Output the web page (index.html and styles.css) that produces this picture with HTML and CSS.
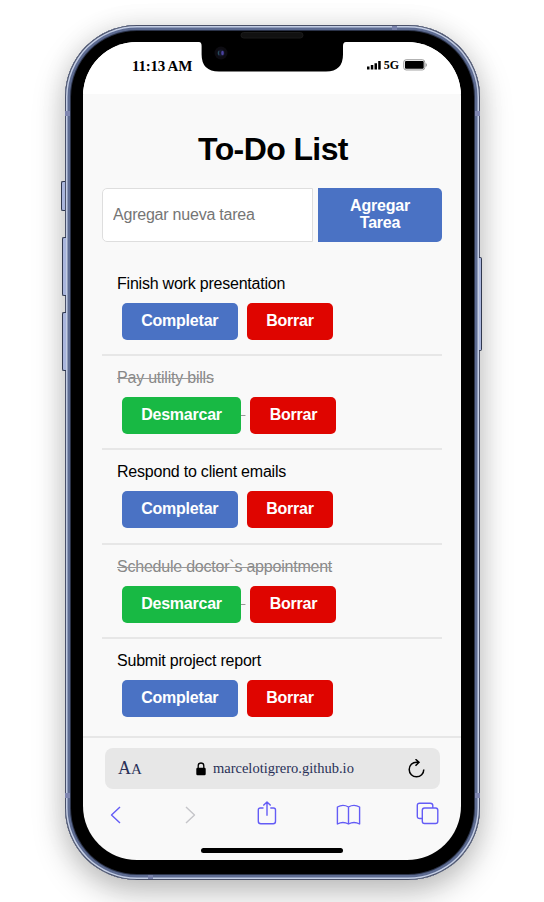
FILE: index.html
```html
<!DOCTYPE html>
<html lang="es">
<head>
<meta charset="utf-8">
<title>To-Do List</title>
<link rel="stylesheet" href="styles.css">
</head>
<body>
<div class="phone">
  <i class="key key-mute"></i><i class="key key-up"></i><i class="key key-down"></i><i class="key key-power"></i>
  <i class="seam seam-tl"></i><i class="seam seam-tr"></i><i class="seam seam-bl"></i><i class="seam seam-br"></i>
  <i class="seam-h seam-top"></i><i class="seam-h seam-bottom"></i>
  <div class="screen">
    <header class="status">
      <span class="time">11:13 AM</span>
      <span class="signal">
        <svg width="14" height="10" viewBox="0 0 14 10"><path d="M0 6.500h2.500V9.500H0zM3.800 5h2.500v4.500H3.800zM7.500 3.200H10v6.300H7.500zM11.200 1h2.500v8.500h-2.500z"/></svg>
        <span class="network">5G</span>
        <svg width="24" height="12" viewBox="0 0 24 12"><rect x=".750" y=".750" width="21" height="10.200" rx="2.400" fill="#fff" stroke="#999"/><rect x="2" y="2" width="18.700" height="7.800" rx="1"/><path d="M22.600 4v4q1.200-.6 1.200-2t-1.200-2" fill="#888"/></svg>
      </span>
    </header>
    <main class="app">
      <h1>To-Do List</h1>
      <form class="add">
        <input type="text" placeholder="Agregar nueva tarea">
        <button type="button">Agregar Tarea</button>
      </form>
      <ul class="tasks">
        <li><span>Finish work presentation</span><div><button class="complete">Completar</button> <button class="delete">Borrar</button></div></li>
        <li class="done"><span>Pay utility bills</span><div><button class="undo">Desmarcar</button> <button class="delete">Borrar</button></div></li>
        <li><span>Respond to client emails</span><div><button class="complete">Completar</button> <button class="delete">Borrar</button></div></li>
        <li class="done"><span>Schedule doctor`s appointment</span><div><button class="undo">Desmarcar</button> <button class="delete">Borrar</button></div></li>
        <li><span>Submit project report</span><div><button class="complete">Completar</button> <button class="delete">Borrar</button></div></li>
      </ul>
    </main>
    <footer class="browser">
      <div class="address">
        <span class="aa">A<small>A</small></span>
        <span class="url"><svg width="10" height="14" viewBox="0 0 10 14"><path d="M2.200 6V3.800a2.800 2.800 0 0 1 5.600 0V6" fill="none" stroke="#000" stroke-width="1.300"/><rect x=".3" y="5.800" width="9.400" height="7.400" rx="1.200"/></svg>marcelotigrero.github.io</span>
        <svg class="reload" width="17" height="20" viewBox="0 0 17 20"><path d="M11 3.200H8.500A7.300 7.300 0 1 0 15.800 10.500M7.500.2l3.500 3-3.500 3.500" fill="none" stroke="#000" stroke-width="1.500"/></svg>
      </div>
      <nav class="toolbar">
        <svg width="11" height="24" viewBox="0 0 11 24"><path d="M10 6 1.500 14l8.500 8"/></svg>
        <svg class="off" width="11" height="24" viewBox="0 0 11 24"><path d="M1 6 9.500 14 1 22"/></svg>
        <svg width="20" height="24" viewBox="0 0 20 24"><path d="M6.500 7H3.300Q1.300 7 1.300 9v11.300q0 2.500 2.500 2.500h12.400q2.300 0 2.300-2.500V9q0-2-2-2h-3.200M10 14.800V1.200M6.300 4.500 10 .9l3.700 3.600"/></svg>
        <svg width="25" height="24" viewBox="0 0 25 24"><path d="M12.500 6v17M12.500 6Q7 2.800 1.400 6v17q5.600-3 11.100 0 5.500-3 11.100 0V6Q18 2.800 12.500 6"/></svg>
        <svg width="23" height="24" viewBox="0 0 23 24"><rect x="6.300" y="7" width="15.500" height="15.500" rx="2.200"/><path d="M6.300 17.500H3.800Q1.300 17.500 1.300 15.200V4.600q0-2.400 2.400-2.400h10.600q2.500 0 2.500 2.400V7"/></svg>
      </nav>
      <div class="home"></div>
    </footer>
  </div>
  <svg class="notch" width="148" height="41" viewBox="0 0 148 41">
    <path d="M0 11Q2.600 11 2.600 15V23.500Q2.600 40.500 20 40.500H127Q144 40.500 144 23.500V15Q144 11 147 11V0H0z"/>
    <rect x="42" y="1.500" width="62" height="5.500" rx="2.750" fill="#111" stroke="#1b1b1b"/>
    <circle cx="22" cy="22" r="6.500" fill="#0d0c12"/><circle cx="22" cy="22" r="3.600" fill="#15172b"/><path d="M20 20q-1.500 2 0 4" stroke="#28515d" stroke-width="1.200" fill="none"/><ellipse cx="23.500" cy="22" rx="1.300" ry="2.300" fill="#4b42a0"/>
  </svg>
</div>
</body>
</html>
```
FILE: styles.css
```css
* { box-sizing: border-box; }
body {
  margin: 0;
  width: 544px;
  height: 902px;
  overflow: hidden;
  background: #fff;
  font-family: "Liberation Sans", Arial, sans-serif;
  font-size: 16px;
}
.phone {
  position: relative;
  width: 415px;
  height: 855px;
  margin: 25px 0 0 65px;
  padding: 17px 19px 19px 18px;
  border-radius: 72px;
  background: #000;
  box-shadow:
    inset 0 0 0 1px #4a5169,
    inset 0 0 0 2.500px #c3cde4,
    inset 0 0 0 5px #5d6b91,
    inset 0 0 0 6px #2b3349,
    0 12px 32px rgba(0, 0, 0, .26),
    0 0 28px rgba(0, 0, 0, .07);
}
.key {
  position: absolute;
  width: 4px;
  border: 1px solid #30384f;
  border-right: 0;
  border-radius: 2px 0 0 2px;
  background: #a9b5dc;
}
.key-mute { left: -4px; top: 156px; height: 30px; }
.key-up { left: -3px; top: 212px; height: 59px; }
.key-down { left: -3px; top: 287px; height: 59px; }
.key-power { right: -2px; top: 232px; width: 3px; height: 94px; transform: scaleX(-1); }
.seam { position: absolute; width: 5px; height: 5px; background: #7f86b0; }
.seam-tl { left: 0; top: 86px; }
.seam-tr { right: 0; top: 86px; }
.seam-bl { left: 0; bottom: 82px; }
.seam-br { right: 0; bottom: 82px; }
.seam-h { position: absolute; width: 5px; height: 4px; background: #7780a9; }
.seam-top { left: 327px; top: 1px; }
.seam-bottom { left: 83px; bottom: 1px; }
.notch { position: absolute; left: 134px; top: 6px; }
.screen {
  display: flex;
  flex-direction: column;
  height: 818px;
  overflow: hidden;
  border-radius: 54px;
  background: #f9f9f9;
}
.status {
  display: flex;
  justify-content: space-between;
  flex: none;
  height: 52px;
  padding: 15px 34px 0 49px;
  background: #fff;
  font-family: "Liberation Serif", "Times New Roman", serif;
  font-weight: bold;
}
.time { font-size: 15px; line-height: 18px; letter-spacing: -.25px; }
.signal { display: flex; align-items: center; height: 16px; font-size: 12px; }
.network { margin: 0 4px 0 3px; }
.app { flex: none; height: 642px; padding: 36px 19px 0; }
h1 {
  margin: 0 0 19px;
  padding-left: 2px;
  font-size: 32px;
  line-height: 39px;
  letter-spacing: -.6px;
  text-align: center;
}
.add { display: flex; gap: 5px; height: 54px; margin-bottom: 20px; }
.add input {
  width: 211px;
  padding: 0 10px;
  border: 1px solid #dedede;
  border-radius: 5px 0 0 5px;
  font: inherit;
  letter-spacing: -.22px;
}
.add input::placeholder { color: #757575; }
button {
  border: 0;
  border-radius: 5px;
  color: #fff;
  background: #4a72c4;
  font: bold 16px/17px "Liberation Sans", Arial, sans-serif;
  letter-spacing: -.22px;
}
.add button { width: 124px; padding: 0 20px 2px; border-radius: 0 5px 5px 0; }
.tasks { margin: 0; padding: 0; list-style: none; }
.tasks li {
  height: 94.200px;
  padding: 12px 15px 0;
  border-bottom: 2px solid #e7e7e7;
}
.tasks li:last-child { border-bottom: 0; }
.tasks span { display: block; height: 29px; line-height: 19px; letter-spacing: -.22px; }
.tasks div { height: 37px; line-height: 35px; }
.tasks button { width: 115.500px; height: 37px; margin: 0 0 0 5px; padding: 0 0 2px; vertical-align: top; }
.tasks button.delete { width: 86px; background: #df0500; }
.tasks button.undo { width: 119px; background: #18b944; }
.done { color: #888; text-decoration: line-through #999; }
.browser {
  flex: 1;
  padding: 10px 21px 0 22px;
  border-top: 2px solid #e7e7e7;
}
.address {
  display: flex;
  align-items: center;
  justify-content: space-between;
  height: 41px;
  padding: 0 15px 0 13px;
  border-radius: 8px;
  background: #e7e7e7;
  color: #293057;
  font-family: "Liberation Serif", "Times New Roman", serif;
}
.aa { font-size: 18px; }
.aa small { font-size: 15px; }
.url { display: flex; align-items: center; gap: 7px; font-size: 14.500px; }
.toolbar {
  display: grid;
  grid-template-columns: 75px 72px 79px 80px 23px;
  margin: 12px 0 0 5px;
}
.toolbar svg { fill: none; stroke: #645cf6; stroke-width: 1.400; stroke-linejoin: round; }
.toolbar .off { stroke: #c5c5c9; }
.home { width: 142px; height: 5px; margin: 23px 0 0 96px; border-radius: 3px; background: #000; }
```
